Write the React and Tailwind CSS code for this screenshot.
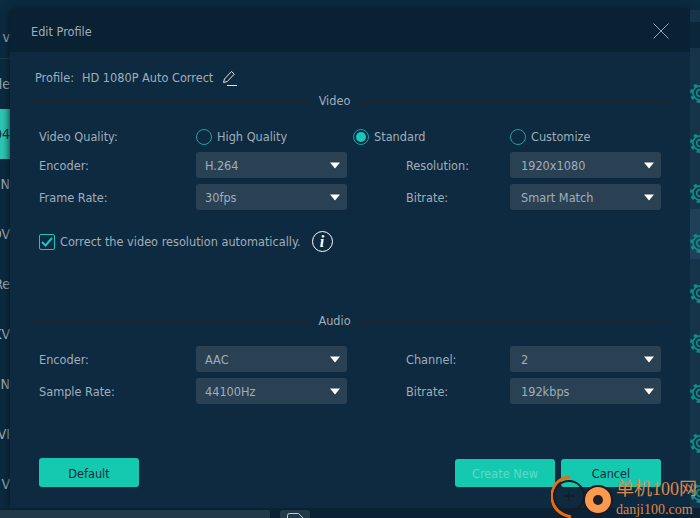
import React from "react";

function Select({ value, right }) {
  return (
    <div className={"flex h-[26px] w-[151px] items-center justify-between rounded-[3px] bg-[#2a4154] pr-[5px] text-[#a0aeb9] " + (right ? "pl-[11px]" : "pl-[9px]")}>
      <span className="mt-[2px]">{value}</span>
      <svg width="12" height="7" viewBox="0 0 12 7" className="mr-[1px]"><path d="M1 0.5h10L6 6.5z" fill="#ffffff" /></svg>
    </div>
  );
}

function Row({ label, value, label2, value2 }) {
  return (
    <div className="flex h-[26px] items-center text-[#a0aeb9]">
      <span className="mt-[2px] w-[157px]">{label}</span>
      <Select value={value} />
      <span className="ml-[59px] mt-[2px] w-[104px]">{label2}</span>
      <Select value={value2} right />
    </div>
  );
}

function Divider({ label }) {
  return (
    <div className="flex h-[16px] items-center text-[#a0aeb9]">
      <div className="mt-[3px] h-px w-[279px] bg-[#23252d]" />
      <span className="w-[51px] text-center leading-[16px]">{label}</span>
      <div className="mt-[3px] h-px w-[310px] bg-[#23252d]" />
    </div>
  );
}

function Radio({ label, checked, className }) {
  return (
    <div className={"flex items-center gap-[5px] " + className}>
      <span className="flex size-4 items-center justify-center rounded-full border border-[#12a8a0]">
        {checked && <span className="size-[10px] rounded-full bg-[#17c8bf]" />}
      </span>
      <span>{label}</span>
    </div>
  );
}

function Gear() {
  return (
    <svg width="20" height="20" viewBox="0 0 24 24" fill="none" stroke="#0e8f88" className="shrink-0">
      <circle cx="12" cy="12" r="4" strokeWidth="2" />
      <circle cx="12" cy="12" r="8.5" strokeWidth="2" />
      <circle cx="12" cy="12" r="10.5" strokeWidth="3" strokeDasharray="4 4.25" />
    </svg>
  );
}

export default function App() {
  const left = ["le", "04", "N", "OV", "Re", "KV", "N", "VI", "V"];
  return (
    <div className="relative flex h-[518px] w-[700px] flex-col overflow-hidden bg-[#0c2a3f] font-['DejaVu_Sans_Condensed','DejaVu_Sans',sans-serif] text-[12.6px]">
      <div className="h-[10px] shrink-0 bg-[#0b2b40]" />
      <div className="flex h-[498px] shrink-0">
        <div className="flex w-[10px] shrink-0 flex-col overflow-hidden bg-[#0b2a3f] text-[14px] text-[#a0aeb9]">
          <div className="flex h-[49px] shrink-0 items-center justify-end border-b border-[#1c3b4e] pt-[6px]">
            <span>v</span>
          </div>
          {left.map((t, i) => (
            <div key={i} className={"flex h-[50px] shrink-0 items-center justify-end whitespace-nowrap " + (i === 1 ? "bg-[#2dc9b4] text-[#0c2a3f]" : "")}>
              <span>{t}</span>
            </div>
          ))}
        </div>

        <div className="flex w-[680px] shrink-0 flex-col bg-[#0d2a40] shadow-[0_0_8px_#06141f]">
          <div className="flex h-[42px] shrink-0 items-center justify-between bg-[#0a2033] pl-[21px] pr-[21px] text-[#a0aeb9]">
            <span className="mt-[2px]">Edit Profile</span>
            <svg width="16" height="16" viewBox="0 0 16 16" stroke="#9aa7b1" strokeWidth="1" fill="none"><path d="M.5.5l15 15M15.5.5l-15 15" /></svg>
          </div>

          <div className="mt-[17px] flex h-[18px] items-center pl-[25px] text-[#a0aeb9]">
            <span>Profile:</span>
            <span className="ml-[8px]">HD 1080P Auto Correct</span>
            <svg width="16" height="16" viewBox="0 0 16 16" fill="none" stroke="#dfe4e8" strokeWidth="1" className="ml-[9px]">
              <path d="M1.5 12.5L2.5 9l7-7.5 2.8 2.6-7 7.4z" /><path d="M5 15.5h10" />
            </svg>
          </div>

          <div className="mt-[6px] pl-[20px]"><Divider label="Video" /></div>

          <div className="flex flex-col pl-[29px] pt-[18px]">
            <div className="flex h-[20px] items-center text-[#a0aeb9]">
              <span className="w-[157px]">Video Quality:</span>
              <Radio label="High Quality" className="w-[157px]" />
              <Radio label="Standard" checked className="w-[157px]" />
              <Radio label="Customize" />
            </div>
            <div className="mt-[5px] flex flex-col gap-[6px]">
              <Row label="Encoder:" value="H.264" label2="Resolution:" value2="1920x1080" />
              <Row label="Frame Rate:" value="30fps" label2="Bitrate:" value2="Smart Match" />
            </div>
            <div className="mt-[21px] flex items-center text-[#a0aeb9]">
              <span className="flex size-4 items-center justify-center rounded-[2px] border border-[#17c8bf]">
                <svg width="12" height="10" viewBox="0 0 12 10" fill="none" stroke="#17c8bf" strokeWidth="2"><path d="M1 5l3.5 3.5L11 1" /></svg>
              </span>
              <span className="ml-[5px] mt-[1px]">Correct the video resolution automatically.</span>
              <span className="ml-[11px] flex size-[21px] items-center justify-center rounded-full border-[1.5px] border-white font-['Liberation_Serif',serif] text-[16px] font-bold italic text-white">i</span>
            </div>
          </div>

          <div className="mt-[61px] pl-[20px]"><Divider label="Audio" /></div>

          <div className="flex flex-col gap-[6px] pl-[29px] pt-[17px]">
            <Row label="Encoder:" value="AAC" label2="Channel:" value2="2" />
            <Row label="Sample Rate:" value="44100Hz" label2="Bitrate:" value2="192kbps" />
          </div>

          <div className="mt-[54px] flex items-end pl-[29px] pr-[29px]">
            <button className="h-[29px] w-[100px] rounded-[3px] bg-[#14c9b0] pt-[3px] text-[#0d2a40]">Default</button>
            <button className="ml-auto h-[28px] w-[100px] rounded-[3px] bg-[#14c9b0] pt-[2px] text-[#5fd9cb]">Create New</button>
            <button className="ml-[6px] h-[28px] w-[100px] rounded-[3px] bg-[#14c9b0] pt-[2px] text-[#0d2a40]">Cancel</button>
          </div>
        </div>

        <div className="flex w-[10px] shrink-0 flex-col overflow-hidden bg-[#153349]">
          <div className="mb-[11px] mt-[12px] h-[26px] shrink-0 bg-[#0a2638]" />
          {[0, 1, 2, 3, 4, 5, 6, 7, 8].map((i) => (
            <div key={i} className={"flex h-[50px] shrink-0 items-center pt-[18px] " + (i === 3 ? "bg-[#1f4059]" : "")}>
              <Gear />
            </div>
          ))}
        </div>
      </div>
      <div className="flex h-[10px] shrink-0 items-start bg-[#0a2233] pt-[2px]">
        <div className="h-[8px] w-[270px] rounded-tr-[2px] bg-[#22394a]" />
        <div className="ml-[10px] flex h-[8px] w-[30px] justify-center overflow-hidden rounded-t-[3px] bg-[#22394a] pt-[3px]">
          <svg width="17" height="12" viewBox="0 0 17 12" fill="none" stroke="#c3ccd2" strokeWidth="1" className="shrink-0"><path d="M.5 11.5V2.5a2 2 0 0 1 2-2h9l5 5v6" /></svg>
        </div>
      </div>

      <div className="pointer-events-none absolute left-[551px] top-[475px] flex items-center">
        <svg width="66" height="43" viewBox="0 0 66 43" fill="none" className="shrink-0">
          <path d="M19 2C7 3 1 11 1 21c0 10 6 18 19 21" stroke="#f06a0e" strokeWidth="3" />
          <circle cx="18" cy="21" r="15" stroke="#1a1a22" strokeWidth="2" />
          <path d="M18 16v10M13 21h10" stroke="#1a1a22" strokeWidth="1.5" />
          <circle cx="47" cy="25" r="14" fill="#fb9a4e" stroke="#1a1a22" strokeWidth="2" />
          <circle cx="47" cy="25" r="5" fill="#1f1f26" />
        </svg>
      </div>
      <div className="pointer-events-none absolute left-[616px] top-[477px] flex flex-col whitespace-nowrap font-['Liberation_Serif','Noto_Sans_CJK_SC',serif] text-[#e08748]">
        <span className="text-[18px] leading-[24px]">单机100网</span>
        <span className="text-[14px] leading-[17px]">danji100.com</span>
      </div>
    </div>
  );
}
